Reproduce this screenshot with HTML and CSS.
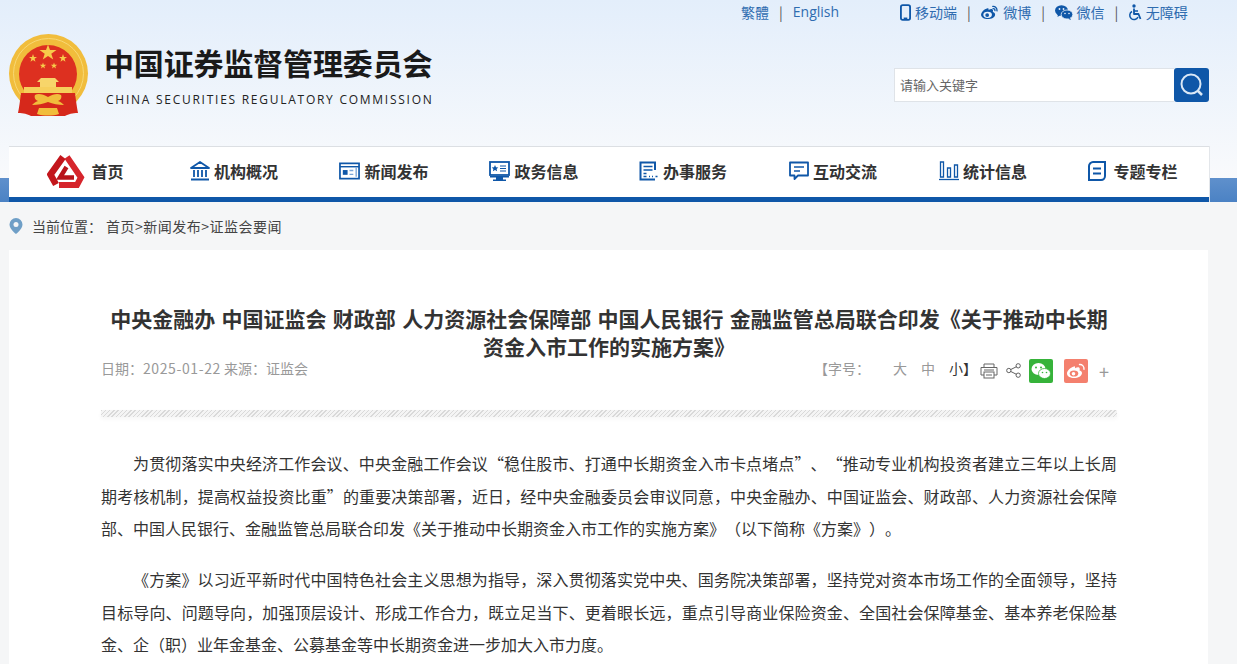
FILE: index.html
```html
<!DOCTYPE html>
<html lang="zh-CN">
<head>
  <meta charset="UTF-8" />
  <meta name="viewport" content="width=device-width, initial-scale=1.0" />
  <title>中国证券监督管理委员会</title>
  <link rel="stylesheet" href="styles.css">
</head>
<body>
  <header class="site-header">
    <div class="topbar">
      <div class="lang-links">
        <a href="#">繁體</a><span class="sep">|</span><a href="#" class="en">English</a>
      </div>
      <div class="tool-links">
        <a href="#">
          <svg class="tool-icon" viewBox="0 0 12 18" width="11" height="17"><rect x="1" y="1" width="10" height="16" rx="2" fill="none" stroke="#0f57a8" stroke-width="2"/><rect x="4" y="14.5" width="4" height="2" fill="#0f57a8"/></svg>
          <span>移动端</span>
        </a>
        <span class="sep">|</span>
        <a href="#">
          <svg class="tool-icon" viewBox="0 0 20 16" width="19" height="15"><path d="M8 3.500C4 4.500 1 8 1 10.500 1 13.500 4.500 15 8 15c4 0 8-2 8-5 0-1.500-1.500-2.200-2.500-2.500.5-1.500.3-2.500-.5-3-1-.5-2.500 0-4 .8.300-1.500-.2-2.300-1-1.800z" fill="#0f57a8"/><ellipse cx="8" cy="10.500" rx="4.600" ry="3.300" fill="#e9f1fb"/><circle cx="7.500" cy="10.700" r="2" fill="#0f57a8"/><path d="M13.500 1.500c2.500-.3 4.800 1.700 4.500 4.800M13.800 3.800c1.200-.1 2.200.8 2 2.200" fill="none" stroke="#0f57a8" stroke-width="1.400" stroke-linecap="round"/></svg>
          <span>微博</span>
        </a>
        <span class="sep">|</span>
        <a href="#">
          <svg class="tool-icon" viewBox="0 0 18 15" width="18" height="15"><ellipse cx="6.500" cy="5.500" rx="6.500" ry="5.200" fill="#0f57a8"/><path d="M3 9l-.5 3 3-2z" fill="#0f57a8"/><ellipse cx="12" cy="9.500" rx="5.800" ry="4.500" fill="#0f57a8" stroke="#e9f1fb" stroke-width=".8"/><path d="M15 13l1 2-3-1.200z" fill="#0f57a8"/><circle cx="4.500" cy="4" r=".9" fill="#e9f1fb"/><circle cx="8.500" cy="4" r=".9" fill="#e9f1fb"/><circle cx="10" cy="8.500" r=".8" fill="#e9f1fb"/><circle cx="14" cy="8.500" r=".8" fill="#e9f1fb"/></svg>
          <span>微信</span>
        </a>
        <span class="sep">|</span>
        <a href="#">
          <svg class="tool-icon" viewBox="0 0 14 17" width="14" height="17"><circle cx="6" cy="2" r="1.700" fill="#0f57a8"/><path d="M6 4.500V10h4.500l2 5" fill="none" stroke="#0f57a8" stroke-width="1.800" stroke-linejoin="round"/><path d="M6 7h4" stroke="#0f57a8" stroke-width="1.500"/><path d="M4 7.500a4.300 4.300 0 1 0 6 5.500" fill="none" stroke="#0f57a8" stroke-width="1.500"/></svg>
          <span>无障碍</span>
        </a>
      </div>
    </div>

    <div class="brand-row">
      <a href="#" class="brand">
        <svg class="emblem" viewBox="0 0 80 84" width="80" height="84">
          <circle cx="39.500" cy="39.500" r="39.500" fill="#f1bd3c"/>
          <circle cx="39.500" cy="39.500" r="35" fill="none" stroke="#f8d873" stroke-width="1"/>
          <circle cx="39" cy="40" r="29" fill="#dd3020"/>
          <polygon points="39,10.500 41,16 47.500,16 42.300,19.800 44.200,25.500 39,22 33.800,25.500 35.700,19.800 30.500,16 37,16" fill="#f7cb4a"/>
          <polygon points="24,20 25,23 28,23 25.600,24.800 26.500,27.800 24,26 21.500,27.800 22.400,24.800 20,23 23,23" fill="#f7cb4a"/>
          <polygon points="54,20 55,23 58,23 55.600,24.800 56.500,27.800 54,26 51.500,27.800 52.400,24.800 50,23 53,23" fill="#f7cb4a"/>
          <polygon points="34,28.500 34.800,30.800 37.200,30.800 35.300,32.200 36,34.500 34,33.100 32,34.500 32.700,32.200 30.800,30.800 33.200,30.800" fill="#f7cb4a"/>
          <polygon points="45,28.500 45.800,30.800 48.200,30.800 46.300,32.200 47,34.500 45,33.100 43,34.500 43.700,32.200 41.800,30.800 44.200,30.800" fill="#f7cb4a"/>
          <path d="M28 48l4-4h14l4 4h-3v5H31v-5z" fill="#f7d56a"/>
          <path d="M15 53h48v6H15z" fill="#f6cf5c"/>
          <path d="M12 59h54c1 8 2 15 3 20-6 0-9 1-13 3H22c-4-2-7-3-13-3 1-5 2-12 3-20z" fill="#d6281b"/>
          <path d="M26 61c3-2 8-1 13 2 5-3 10-4 13-2 1 2 0 5-3 6 3 1 4 2 6 4-6 0-11-1-16-3-5 2-10 3-16 3 2-2 3-3 6-4-3-1-4-4-3-6z" fill="#f1bd3c"/>
          <path d="M30 74h18l2 6c-6 2-16 2-22 0z" fill="#f1bd3c"/>
        </svg>
        <div class="brand-text">
          <div class="brand-cn">中国证券监督管理委员会</div>
          <div class="brand-en">CHINA SECURITIES REGULATORY COMMISSION</div>
        </div>
      </a>
      <form class="search" onsubmit="return false">
        <input class="search-input" type="text" placeholder="请输入关键字">
        <button class="search-btn" type="submit" aria-label="搜索">
          <svg viewBox="0 0 26 26" width="26" height="26"><circle cx="12" cy="12" r="9.500" fill="none" stroke="#dbe8f6" stroke-width="2"/><path d="M19 19l4 4" stroke="#dbe8f6" stroke-width="2.500"/></svg>
        </button>
      </form>
    </div>
  </header>

  <div class="nav-wrap">
    <nav class="main-nav">
      <a href="#" class="nav-home">
        <svg class="csrc-logo" viewBox="0 0 38 34" width="38" height="34">
          <path d="M16 3L3.500 20.500 9 30.500" fill="none" stroke="#c3161c" stroke-width="6.500" stroke-linejoin="miter"/>
          <path d="M20 3l14 20.500-4 7.500H12" fill="none" stroke="#d6252c" stroke-width="6" stroke-linejoin="miter"/>
          <path d="M19.500 13l-6.500 10.500h14" fill="none" stroke="#b8141b" stroke-width="4.500" stroke-linejoin="miter"/>
        </svg>
        <span>首页</span>
      </a>
      <a href="#">
        <svg viewBox="0 0 20 20" width="20" height="20"><path d="M10 1L1 7h18z" fill="none" stroke="#0f57a8" stroke-width="1.800" stroke-linejoin="round"/><path d="M4 9v7M8 9v7M12 9v7M16 9v7" stroke="#0f57a8" stroke-width="1.800"/><path d="M1 18.500h18" stroke="#0f57a8" stroke-width="2"/></svg>
        <span>机构概况</span>
      </a>
      <a href="#">
        <svg viewBox="0 0 22 18" width="21" height="18"><rect x="1" y="1" width="20" height="16" fill="none" stroke="#0f57a8" stroke-width="1.800"/><path d="M1 4.500h20" stroke="#0f57a8" stroke-width="1.500"/><rect x="4" y="8" width="5" height="5" fill="#0f57a8"/><path d="M11 8.500h4M11 12.500h4M18 5v10" stroke="#7aa5d6" stroke-width="1.400"/></svg>
        <span>新闻发布</span>
      </a>
      <a href="#">
        <svg viewBox="0 0 21 20" width="21" height="20"><rect x="1" y="1" width="19" height="13" fill="none" stroke="#0f57a8" stroke-width="1.800"/><path d="M6 4l1 2.200 2.300.2-1.700 1.500.5 2.300L6 9l-2.100 1.200.5-2.300L2.700 6.400 5 6.200z" fill="#0f57a8"/><path d="M11 5h6M11 7.500h6M11 10h6" stroke="#0f57a8" stroke-width="1.200"/><path d="M1 15h19v1.500H1zM7 16.500h7v2H7zM4 18.500h13V20H4z" fill="#0f57a8"/></svg>
        <span>政务信息</span>
      </a>
      <a href="#">
        <svg viewBox="0 0 20 20" width="20" height="20"><path d="M16 18.500H1.500V1.500H16V9" fill="none" stroke="#0f57a8" stroke-width="2"/><path d="M4.500 5.500h9M4.500 9h9M4.500 12.500h3M4.500 15.500h3M10 15.500h1M13 15.500h1M16.500 15.500h2" stroke="#0f57a8" stroke-width="1.500"/></svg>
        <span>办事服务</span>
      </a>
      <a href="#">
        <svg viewBox="0 0 20 20" width="20" height="20"><path d="M1 1.500h18v13H9l-3.500 3.500v-3.500H1z" fill="none" stroke="#0f57a8" stroke-width="1.800" stroke-linejoin="round"/><path d="M5 6h10M5 10h6" stroke="#0f57a8" stroke-width="1.500"/></svg>
        <span>互动交流</span>
      </a>
      <a href="#">
        <svg viewBox="0 0 20 20" width="20" height="20"><path d="M1.500 1h3v15h-3zM8.500 7h3v9h-3zM15.500 4h3v12h-3z" fill="none" stroke="#0f57a8" stroke-width="1.300"/><path d="M0 18.500h20" stroke="#0f57a8" stroke-width="1.300"/></svg>
        <span>统计信息</span>
      </a>
      <a href="#" class="nav-last">
        <svg viewBox="0 0 18 20" width="18" height="20"><path d="M5 1h12v14c0 2-1.500 4-4 4H1V5c0-2 2-4 4-4z" fill="none" stroke="#0f57a8" stroke-width="2"/><path d="M5 7.500h8M5 12.500h8" stroke="#0f57a8" stroke-width="2"/></svg>
        <span>专题专栏</span>
      </a>
    </nav>
  </div>

  <div class="crumb">
    <svg viewBox="0 0 14 16" width="14" height="16"><path d="M7 0a6.500 6.500 0 0 0-6.500 6.500C.5 11 7 16 7 16s6.500-5 6.500-9.500A6.500 6.500 0 0 0 7 0z" fill="#6f9fc7"/><circle cx="7" cy="6.500" r="2.500" fill="#f5f6f7"/></svg>
    <span class="crumb-label">当前位置：</span>
    <span class="crumb-path">首页&gt;新闻发布&gt;证监会要闻</span>
  </div>

  <main class="article">
    <h1 class="article-title">中央金融办 中国证监会 财政部 人力资源社会保障部 中国人民银行 金融监管总局联合印发《关于推动中长期资金入市工作的实施方案》</h1>
    <div class="meta">
      <div class="meta-left">日期：<span class="date">2025-01-22</span> 来源：证监会</div>
      <div class="meta-right">
        <span class="size-label">【字号：</span>
        <span class="size-opt">大</span>
        <span class="size-opt">中</span>
        <span class="size-opt active">小】</span>
        <svg class="meta-icon" viewBox="0 0 18 16" width="18" height="16"><path d="M4 4V1h10v3M4 12H1V4.500h16V12h-3" fill="none" stroke="#666" stroke-width="1"/><rect x="4" y="9" width="10" height="6" fill="none" stroke="#666" stroke-width="1"/><path d="M4 7h10M6 12h6" stroke="#666"/></svg>
        <svg class="meta-icon" viewBox="0 0 16 16" width="15" height="15"><circle cx="3" cy="8" r="2.300" fill="none" stroke="#555"/><circle cx="13" cy="3" r="2.300" fill="none" stroke="#555"/><circle cx="13" cy="13" r="2.300" fill="none" stroke="#555"/><path d="M5 7l6-3M5 9l6 3" stroke="#555"/></svg>
        <span class="share wx">
          <svg viewBox="0 0 20 18" width="20" height="18"><ellipse cx="7.500" cy="7" rx="7" ry="6" fill="#fff"/><ellipse cx="13.500" cy="11.500" rx="6" ry="5" fill="#fff" stroke="#36b33a" stroke-width=".8"/><circle cx="5" cy="5.500" r="1" fill="#36b33a"/><circle cx="10" cy="5.500" r="1" fill="#36b33a"/><circle cx="11.500" cy="10.500" r=".8" fill="#36b33a"/><circle cx="15.500" cy="10.500" r=".8" fill="#36b33a"/></svg>
        </span>
        <span class="share wb">
          <svg viewBox="0 0 20 16" width="20" height="16"><path d="M8 3.500C4 4.500 1 8 1 10.500 1 13.500 4.500 15 8 15c4 0 8-2 8-5 0-1.500-1.500-2.200-2.500-2.500.5-1.500.3-2.500-.5-3-1-.5-2.500 0-4 .8.300-1.500-.2-2.300-1-1.800z" fill="#fff"/><ellipse cx="8" cy="10.500" rx="4.300" ry="3.100" fill="#f4806e"/><circle cx="7.500" cy="10.700" r="1.800" fill="#fff"/><path d="M13.500 1.500c2.500-.3 4.800 1.700 4.500 4.800" fill="none" stroke="#fff" stroke-width="1.400" stroke-linecap="round"/></svg>
        </span>
        <span class="share-more">+</span>
      </div>
    </div>
    <div class="divider"></div>
    <div class="article-body">
      <p>为贯彻落实中央经济工作会议、中央金融工作会议“稳住股市、打通中长期资金入市卡点堵点”、“推动专业机构投资者建立三年以上长周期考核机制，提高权益投资比重”的重要决策部署，近日，经中央金融委员会审议同意，中央金融办、中国证监会、财政部、人力资源社会保障部、中国人民银行、金融监管总局联合印发《关于推动中长期资金入市工作的实施方案》（以下简称《方案》）。</p>
      <p>《方案》以习近平新时代中国特色社会主义思想为指导，深入贯彻落实党中央、国务院决策部署，坚持党对资本市场工作的全面领导，坚持目标导向、问题导向，加强顶层设计、形成工作合力，既立足当下、更着眼长远，重点引导商业保险资金、全国社会保障基金、基本养老保险基金、企（职）业年金基金、公募基金等中长期资金进一步加大入市力度。</p>
    </div>
  </main>
</body>
</html>
```

FILE: styles.css
```css
html {
  height: 100%;
  overflow: hidden;
}
body {
  margin: 0;
  height: 664px;
  overflow: hidden;
  font-family: "Noto Sans CJK SC", "Liberation Sans", sans-serif;
  text-spacing-trim: space-all;
  background: #f5f6f7 linear-gradient(180deg, #e3eefb 0, #f9fafc 178px) no-repeat;
  background-size: 100% 178px;
  color: #333;
}
a {
  color: inherit;
  text-decoration: none;
}
.site-header {
  height: 146px;
  box-sizing: border-box;
}
.topbar {
  display: flex;
  height: 24px;
  padding-left: 741px;
  font-size: 14px;
  line-height: 24px;
  color: #2f6cb0;
}
.lang-links {
  display: flex;
  width: 159px;
}
.lang-links .sep {
  margin: 0 10px;
}
.en {
  font-family: "Open Sans", "Liberation Sans", sans-serif;
}
.sep {
  color: #555;
  font-size: 14px;
}
.tool-links {
  display: flex;
  align-items: center;
}
.tool-links a {
  display: flex;
  align-items: center;
  gap: 4px;
}
.tool-links .sep {
  margin: 0 9.5px 0 10px;
}
.brand-row {
  display: flex;
  justify-content: space-between;
  align-items: flex-start;
  padding: 10px 28px 0 9px;
}
.brand {
  display: flex;
  gap: 15px;
}
.brand-text {
  padding-top: 6px;
}
.brand-cn {
  font-size: 30px;
  line-height: 44px;
  font-weight: 700;
  letter-spacing: -0.15px;
  color: #1a1a1a;
}
.brand-en {
  font-family: "Open Sans", "Liberation Sans", sans-serif;
  font-size: 12px;
  line-height: 16px;
  letter-spacing: 1.74px;
  color: #222;
  margin: 8px 0 0 2px;
  white-space: nowrap;
}
.search {
  display: flex;
  margin-top: 34px;
  height: 34px;
}
.search-input {
  width: 280px;
  height: 34px;
  box-sizing: border-box;
  border: 1px solid #dfe3e8;
  border-right: none;
  background: #fff;
  padding: 0 5px 2px;
  font: 13px "Noto Sans CJK SC", sans-serif;
  color: #555;
  outline: none;
}
.search-input::placeholder {
  color: #666;
}
.search-btn {
  width: 35px;
  height: 34px;
  padding: 0;
  border: none;
  border-radius: 3px;
  background: #0f57a8;
  display: flex;
  align-items: center;
  justify-content: center;
}
.nav-wrap {
  padding: 0 28px 0 9px;
  background: linear-gradient(180deg, transparent 32px, #5f90cc 32px, #4b82c4 56px);
}
.main-nav {
  display: grid;
  grid-template-columns: repeat(8, 1fr);
  height: 56px;
  box-sizing: border-box;
  background: #fff;
  border-top: 1px solid #dcdfe3;
  border-bottom: 5px solid #0f57a8;
  box-shadow: 1px 0 0 #e3e6ea;
}
.main-nav a {
  display: flex;
  align-items: center;
  justify-content: center;
  gap: 4px;
  padding-bottom: 2px;
  font-size: 16px;
  font-weight: 700;
  color: #333;
}
.main-nav a:nth-child(n+5) {
  padding-right: 2px;
}
.main-nav .nav-home {
  gap: 6px;
  padding-left: 3px;
}
.main-nav .nav-last {
  gap: 7px;
}
.crumb {
  display: flex;
  align-items: center;
  height: 48px;
  padding-left: 9px;
  font-size: 14px;
  color: #444;
}
.crumb-label {
  margin-left: 9px;
  margin-right: 4px;
}
.crumb-path {
  letter-spacing: 0.5px;
}
.article {
  margin: 0 29px 0 9px;
  padding: 54px 91px 0 92px;
  background: #fff;
  height: 414px;
  box-sizing: border-box;
  overflow: hidden;
}
.article-title {
  margin: 0;
  font-size: 21px;
  line-height: 28px;
  font-weight: 700;
  word-spacing: 1.5px;
  color: #333;
  text-align: center;
}
.meta {
  display: flex;
  justify-content: space-between;
  align-items: center;
  height: 16px;
  line-height: 16px;
  font-size: 14px;
  color: #999;
}
.date {
  letter-spacing: 0.6px;
}
.meta-right {
  display: flex;
  align-items: center;
  padding-right: 8px;
}
.size-label {
  margin-right: 16px;
}
.size-opt {
  margin-left: 7px;
  margin-right: 7px;
}
.size-opt.active {
  color: #333;
  margin-right: 0;
}
.meta-icon {
  margin-left: 3px;
  margin-top: 5px;
}
.meta-right .meta-icon + .meta-icon {
  margin-left: 8px;
  margin-top: 4px;
}
.share {
  width: 24px;
  height: 24px;
  border-radius: 2px;
  display: flex;
  align-items: center;
  justify-content: center;
  margin-left: 8px;
  margin-top: 6px;
}
.wx {
  background: #36b33a;
}
.wb {
  background: #f4806e;
  margin-left: 11px;
}
.share-more {
  margin-left: 11px;
  margin-top: 6px;
  font-size: 18px;
  color: #999;
}
.divider {
  margin-top: 34px;
  height: 7px;
  background: repeating-linear-gradient(135deg, #d9d9d9 0, #d9d9d9 1px, #f4f4f4 1px, #f4f4f4 3px);
  box-shadow: 0 2px 4px rgba(0, 0, 0, 0.04);
}
.article-body {
  margin-top: 30px;
}
.article-body p {
  margin: 0 0 18.5px;
  font-size: 16px;
  line-height: 32.5px;
  text-indent: 32px;
  text-align: justify;
  color: #333;
}
```
